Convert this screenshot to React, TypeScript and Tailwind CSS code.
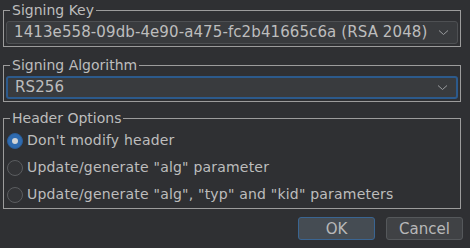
import { useState } from "react";

const font = { fontFamily: '"DejaVu Sans", sans-serif' };

function Chevron() {
  return (
    <svg width="11" height="7" viewBox="0 0 11 7" className="shrink-0">
      <path d="M1 1.5 L5.5 5.5 L10 1.5" fill="none" stroke="#9a9c9f" strokeWidth="1" />
    </svg>
  );
}

function Combo({ value, focused }: { value: string; focused?: boolean }) {
  return (
    <div
      className={
        "mt-[3px] h-[23px] flex items-center justify-between pl-[7px] pr-[8px] rounded-[3px] bg-[#393b3e] text-[15px] text-[#bdbdbd] " +
        (focused ? "border-2 border-[#2c5a8c]" : "border border-[#4e5053]")
      }
    >
      <span className="whitespace-nowrap tracking-[0.1px]">{value}</span>
      <Chevron />
    </div>
  );
}

function Group({ title, children, className }: { title: string; children: React.ReactNode; className?: string }) {
  return (
    <fieldset className={"border border-[#9c9c9c] px-[2px] pb-[2px] " + (className ?? "")}>
      <legend className="ml-[4px] px-[2px] text-[14px] leading-[16px] text-[#bdbdbd]">{title}</legend>
      {children}
    </fieldset>
  );
}

const options = [
  'Don\'t modify header',
  'Update/generate "alg" parameter',
  'Update/generate "alg", "typ" and "kid" parameters',
];

export default function App() {
  const [selected, setSelected] = useState(0);

  return (
    <div className="w-[470px] h-[248px] bg-[#2f3033] pl-[3px] pr-[9px] pt-[2px] overflow-hidden" style={font}>
      <Group title="Signing Key">
        <Combo value="1413e558-09db-4e90-a475-fc2b41665c6a (RSA 2048)" />
      </Group>

      <Group title="Signing Algorithm" className="mt-[10px]">
        <Combo value="RS256" focused />
      </Group>

      <Group title="Header Options" className="mt-[8px] !pb-0">
        <div className="mt-[1px] flex flex-col">
          {options.map((label, i) => (
            <button
              key={label}
              onClick={() => setSelected(i)}
              className="h-[27px] flex items-center gap-[4px] pl-[1px] text-left text-[14px] tracking-[0.2px] text-[#bdbdbd]"
            >
              {selected === i ? (
                <span className="w-[16px] h-[16px] shrink-0 rounded-full bg-[#2f6bb0] border border-[#2a5c97] flex items-center justify-center">
                  <span className="w-[6px] h-[6px] rounded-full bg-[#d2d4d6]" />
                </span>
              ) : (
                <span className="w-[16px] h-[16px] shrink-0 rounded-full bg-[#333437] border border-[#5b5d60]" />
              )}
              <span className="whitespace-nowrap">{label}</span>
            </button>
          ))}
        </div>
      </Group>

      <div className="mt-[8px] flex justify-end gap-[11px] mr-[-2px]">
        <button className="w-[77px] h-[23px] rounded-[3px] bg-[#454c53] border border-[#3a6592] text-[15px] text-[#b8b8b8]">
          OK
        </button>
        <button className="w-[77px] h-[23px] rounded-[3px] bg-[#404245] border border-[#55585b] text-[15px] text-[#b8b8b8]">
          Cancel
        </button>
      </div>
    </div>
  );
}
